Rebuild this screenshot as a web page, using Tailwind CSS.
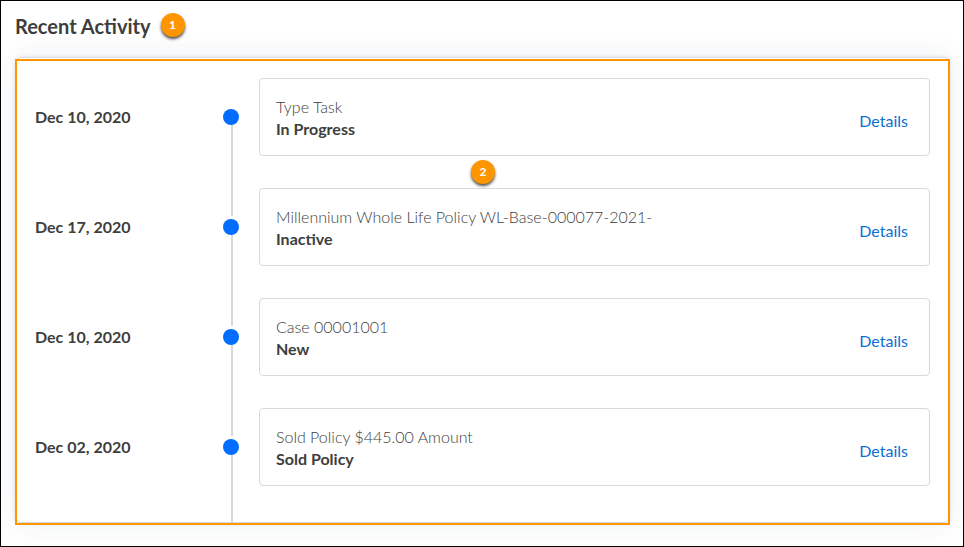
<!DOCTYPE html>
<html lang="en">
<head>
    <meta charset="UTF-8">
    <meta name="viewport" content="width=device-width, initial-scale=1.0">
    <title>Recent Activity</title>
    <script src="https://cdn.jsdelivr.net/npm/@tailwindcss/browser@4"></script>
</head>
<body class="min-h-screen overflow-x-hidden border border-black bg-white pr-[13px] pb-5 pl-3.5 font-['Lato',sans-serif] text-base text-[#3e3e3c]">

    <header class="flex h-14 items-start gap-2.5 pt-3">
        <h1 class="text-xl leading-[26px] font-bold">Recent Activity</h1>
        <span class="flex size-6 items-center justify-center rounded-full bg-[#ff9500] text-xs font-bold text-white shadow-[0_2px_3px_rgba(0,0,0,0.7)]">1</span>
    </header>

    <section class="relative rounded-md border border-[#d8dde6] px-[19px] pt-5 shadow-[0_0_32px_rgba(22,50,92,0.08),0_0_4px_rgba(22,50,92,0.12)]">
        <!-- Highlight frame -->
        <div class="pointer-events-none absolute -inset-x-px top-px -bottom-[3px] border-2 border-[#ff9500]"></div>
        <span class="absolute top-[102px] left-[455px] flex size-6 items-center justify-center rounded-full bg-[#ff9500] text-xs font-bold text-white shadow-[0_2px_3px_rgba(0,0,0,0.7)]">2</span>

        <ul>
            <li class="grid grid-cols-[188px_16px_1fr]">
                <time datetime="2020-12-10" class="pt-[27px] font-bold">Dec 10, 2020</time>
                <div class="relative pt-[31px]">
                    <div class="size-4 rounded-full bg-[#006dff]"></div>
                    <div class="absolute top-[47px] -bottom-7 left-2 w-0.5 bg-[#d9d9d9]"></div>
                </div>
                <div class="mb-8 ml-5 flex items-center justify-between rounded border border-[#d9d9d9] pt-[17px] pr-[21px] pb-[15px] pl-4">
                    <div class="leading-[22px]">
                        <p class="font-light">Type Task</p>
                        <p class="font-bold">In Progress</p>
                    </div>
                    <a href="#" class="mt-1.5 text-[#0b6fd3]">Details</a>
                </div>
            </li>
            <li class="grid grid-cols-[188px_16px_1fr]">
                <time datetime="2020-12-17" class="pt-[27px] font-bold">Dec 17, 2020</time>
                <div class="relative pt-[31px]">
                    <div class="size-4 rounded-full bg-[#006dff]"></div>
                    <div class="absolute top-[47px] -bottom-7 left-2 w-0.5 bg-[#d9d9d9]"></div>
                </div>
                <div class="mb-8 ml-5 flex items-center justify-between rounded border border-[#d9d9d9] pt-[17px] pr-[21px] pb-[15px] pl-4">
                    <div class="leading-[22px]">
                        <p class="font-light">Millennium Whole Life Policy WL-Base-000077-2021-</p>
                        <p class="font-bold">Inactive</p>
                    </div>
                    <a href="#" class="mt-1.5 text-[#0b6fd3]">Details</a>
                </div>
            </li>
            <li class="grid grid-cols-[188px_16px_1fr]">
                <time datetime="2020-12-10" class="pt-[27px] font-bold">Dec 10, 2020</time>
                <div class="relative pt-[31px]">
                    <div class="size-4 rounded-full bg-[#006dff]"></div>
                    <div class="absolute top-[47px] -bottom-7 left-2 w-0.5 bg-[#d9d9d9]"></div>
                </div>
                <div class="mb-8 ml-5 flex items-center justify-between rounded border border-[#d9d9d9] pt-[17px] pr-[21px] pb-[15px] pl-4">
                    <div class="leading-[22px]">
                        <p class="font-light">Case 00001001</p>
                        <p class="font-bold">New</p>
                    </div>
                    <a href="#" class="mt-1.5 text-[#0b6fd3]">Details</a>
                </div>
            </li>
            <li class="grid grid-cols-[188px_16px_1fr] pb-1">
                <time datetime="2020-12-02" class="pt-[27px] font-bold">Dec 02, 2020</time>
                <div class="relative pt-[31px]">
                    <div class="size-4 rounded-full bg-[#006dff]"></div>
                    <div class="absolute top-[47px] -bottom-1 left-2 w-0.5 bg-[#d9d9d9]"></div>
                </div>
                <div class="mb-8 ml-5 flex items-center justify-between rounded border border-[#d9d9d9] pt-[17px] pr-[21px] pb-[15px] pl-4">
                    <div class="leading-[22px]">
                        <p class="font-light">Sold Policy $445.00 Amount</p>
                        <p class="font-bold">Sold Policy</p>
                    </div>
                    <a href="#" class="mt-1.5 text-[#0b6fd3]">Details</a>
                </div>
            </li>
        </ul>
    </section>

</body>
</html>
